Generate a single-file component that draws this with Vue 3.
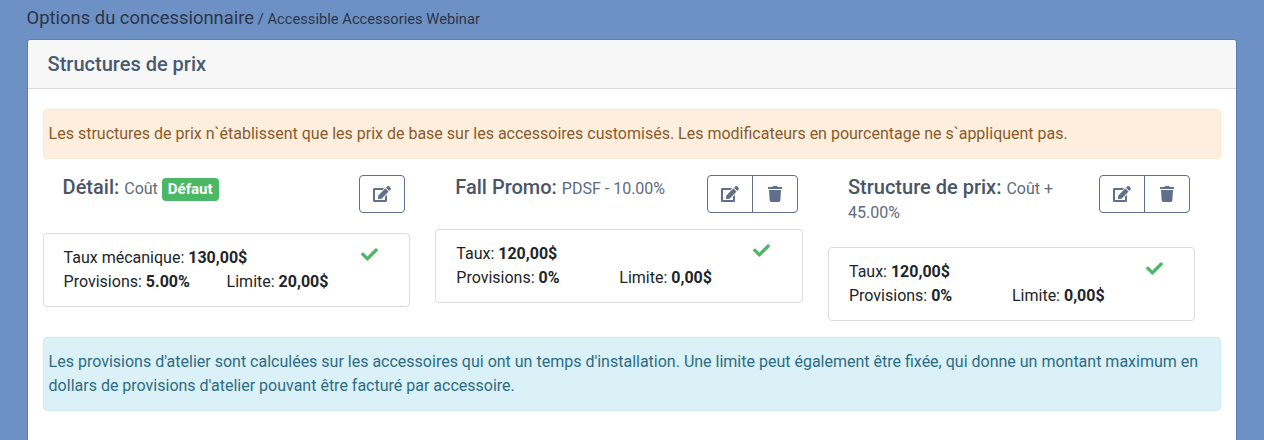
<script setup>
const editPath = 'M402.6 83.2l90.2 90.2c3.8 3.8 3.8 10 0 13.8L274.4 405.6l-92.8 10.3c-12.4 1.4-22.9-9.1-21.5-21.5l10.3-92.8L388.8 83.2c3.8-3.8 10-3.8 13.8 0zm162-22.9l-48.8-48.8c-15.2-15.2-39.9-15.2-55.2 0l-35.4 35.4c-3.8 3.8-3.8 10 0 13.8l90.2 90.2c3.8 3.8 10 3.8 13.8 0l35.4-35.4c15.2-15.3 15.2-40 0-55.2zM384 346.2V448H64V128h229.8c3.2 0 6.2-1.3 8.5-3.5l40-40c7.6-7.6 2.2-20.5-8.5-20.5H48C21.5 64 0 85.5 0 112v352c0 26.5 21.5 48 48 48h352c26.5 0 48-21.5 48-48V306.2c0-10.7-12.9-16-20.5-8.5l-40 40c-2.2 2.3-3.5 5.3-3.5 8.5z'
const trashPath = 'M432 32H312l-9.4-18.7A24 24 0 0 0 281.1 0H166.8a23.72 23.72 0 0 0-21.4 13.3L136 32H16A16 16 0 0 0 0 48v32a16 16 0 0 0 16 16h416a16 16 0 0 0 16-16V48a16 16 0 0 0-16-16zM53.2 467a48 48 0 0 0 47.9 45h245.8a48 48 0 0 0 47.9-45L416 128H32z'
const checkPath = 'M173.898 439.404l-166.4-166.4c-9.997-9.997-9.997-26.206 0-36.204l36.203-36.204c9.997-9.998 26.207-9.998 36.204 0L192 312.69 432.095 72.596c9.997-9.997 26.207-9.997 36.204 0l36.203 36.204c9.997 9.997 9.997 26.206 0 36.204l-294.4 294.401c-9.998 9.997-26.207 9.997-36.204-.001z'

const structures = [
  { name: 'Détail:', sub: 'Coût', badge: 'Défaut', rateLabel: 'Taux mécanique:', rate: '130,00$', prov: '5.00%', limit: '20,00$', canDelete: false },
  { name: 'Fall Promo:', sub: 'PDSF - 10.00%', rateLabel: 'Taux:', rate: '120,00$', prov: '0%', limit: '0,00$', canDelete: true },
  { name: 'Structure de prix:', sub: 'Coût + 45.00%', rateLabel: 'Taux:', rate: '120,00$', prov: '0%', limit: '0,00$', canDelete: true }
]
</script>

<template>
  <div class="page">
    <div class="crumb">
      <span class="crumb-main">Options du concessionnaire</span>
      <span class="crumb-sub"> / Accessible Accessories Webinar</span>
    </div>
    <section class="card">
      <header class="card-header">Structures de prix</header>
      <div class="card-body">
        <div class="alert alert-warn">Les structures de prix n`établissent que les prix de base sur les accessoires customisés. Les modificateurs en pourcentage ne s`appliquent pas.</div>
        <div class="row">
          <div v-for="s in structures" :key="s.name" class="col">
            <div class="col-head">
              <div class="title">
                <strong>{{ s.name }}</strong>
                {{ ' ' }}<small>{{ s.sub }}</small>
                <template v-if="s.badge">{{ ' ' }}<span class="badge">{{ s.badge }}</span></template>
              </div>
              <div class="btn-group">
                <button class="btn" type="button" aria-label="Modifier">
                  <svg class="ico-edit" viewBox="0 0 576 512"><path :d="editPath" /></svg>
                </button>
                <button v-if="s.canDelete" class="btn" type="button" aria-label="Supprimer">
                  <svg class="ico-trash" viewBox="0 0 448 512"><path :d="trashPath" /></svg>
                </button>
              </div>
            </div>
            <div class="box">
              <div class="box-rate">{{ s.rateLabel }} <b>{{ s.rate }}</b></div>
              <svg class="ico-check" viewBox="0 0 512 512"><path :d="checkPath" /></svg>
              <div>Provisions: <b>{{ s.prov }}</b></div>
              <div>Limite: <b>{{ s.limit }}</b></div>
            </div>
          </div>
        </div>
        <div class="alert alert-info">Les provisions d'atelier sont calculées sur les accessoires qui ont un temps d'installation. Une limite peut également être fixée, qui donne un montant maximum en dollars de provisions d'atelier pouvant être facturé par accessoire.</div>
      </div>
    </section>
  </div>
</template>

<style>
html, body { margin: 0; height: 440px; overflow: hidden; background: #6d91c5; }
</style>

<style scoped>
.page {
  font-family: Roboto, "Liberation Sans", sans-serif;
  font-size: 16px;
  line-height: 24px;
  color: #212529;
  padding: 6px 26.6px 0;
  box-sizing: border-box;
}
.crumb {
  height: 33px;
  color: #2c3648;
  white-space: pre;
}
.crumb-main { font-size: 18.4px; }
.crumb-sub { font-size: 14.72px; }
.card {
  background: #fff;
  border: 1px solid rgba(0, 0, 0, 0.125);
  border-radius: 4px;
  background-clip: padding-box;
}
.card-header {
  height: 48px;
  line-height: 48px;
  padding: 0 20px;
  background: #f7f7f7;
  border-bottom: 1px solid #dcdcdc;
  font-size: 20px;
  font-weight: 500;
  color: #4a5a70;
  border-radius: 3px 3px 0 0;
}
.card-body {
  padding: 20px 15px 60px;
}
.alert {
  padding: 12px 5px;
  border: 1px solid;
  border-radius: 4px;
  margin-bottom: 16px;
}
.alert-warn {
  background: #fdeedd;
  border-color: #fce8d3;
  color: #8a5a2c;
}
.alert-info {
  background: #d9f1f7;
  border-color: #cdebf2;
  color: #2f6b84;
}
.row {
  display: grid;
  grid-template-columns: repeat(3, 392.7px);
  align-items: start;
  margin-bottom: 16px;
}
.col {
  padding-right: 25.45px;
}
.col-head {
  display: flex;
  align-items: flex-start;
  justify-content: space-between;
  padding: 0 5px 0 20px;
  margin-bottom: 16px;
}
.title {
  flex: 1;
  min-width: 0;
  padding-right: 30px;
  margin-bottom: 6px;
  color: #4a5568;
}
.title strong {
  font-size: 20px;
  font-weight: 500;
  margin-right: 1px;
}
.title small {
  font-size: 16px;
  color: #5d6a7c;
}
.badge {
  display: inline-block;
  height: 23px;
  line-height: 23px;
  padding: 0 6px;
  margin-bottom: 10px;
  border-radius: 4px;
  background: #4cb866;
  color: #fff;
  font-size: 15px;
  font-weight: 700;
  vertical-align: baseline;
}
.btn-group {
  display: flex;
  flex: none;
}
.btn {
  width: 46px;
  height: 38px;
  padding: 0;
  background: #fff;
  border: 1px solid #5f6f8c;
  display: flex;
  align-items: center;
  justify-content: center;
}
.btn:first-child { border-radius: 4px 0 0 4px; }
.btn:last-child { border-radius: 0 4px 4px 0; }
.btn:only-child { border-radius: 4px; }
.btn + .btn { margin-left: -1px; }
.btn svg { fill: #5f6f8c; display: block; }
.ico-edit { width: 18px; height: 16px; }
.ico-trash { width: 14px; height: 16px; }
.box {
  display: grid;
  grid-template-columns: 163px 134px 1fr;
  padding: 12px 20px;
  border: 1px solid #dcdcdc;
  border-radius: 4px;
}
.box-rate { grid-column: 1 / 3; }
.ico-check {
  width: 17px;
  height: 17px;
  fill: #4cb866;
  margin-top: 0;
}
.box b { font-weight: 700; }
</style>
